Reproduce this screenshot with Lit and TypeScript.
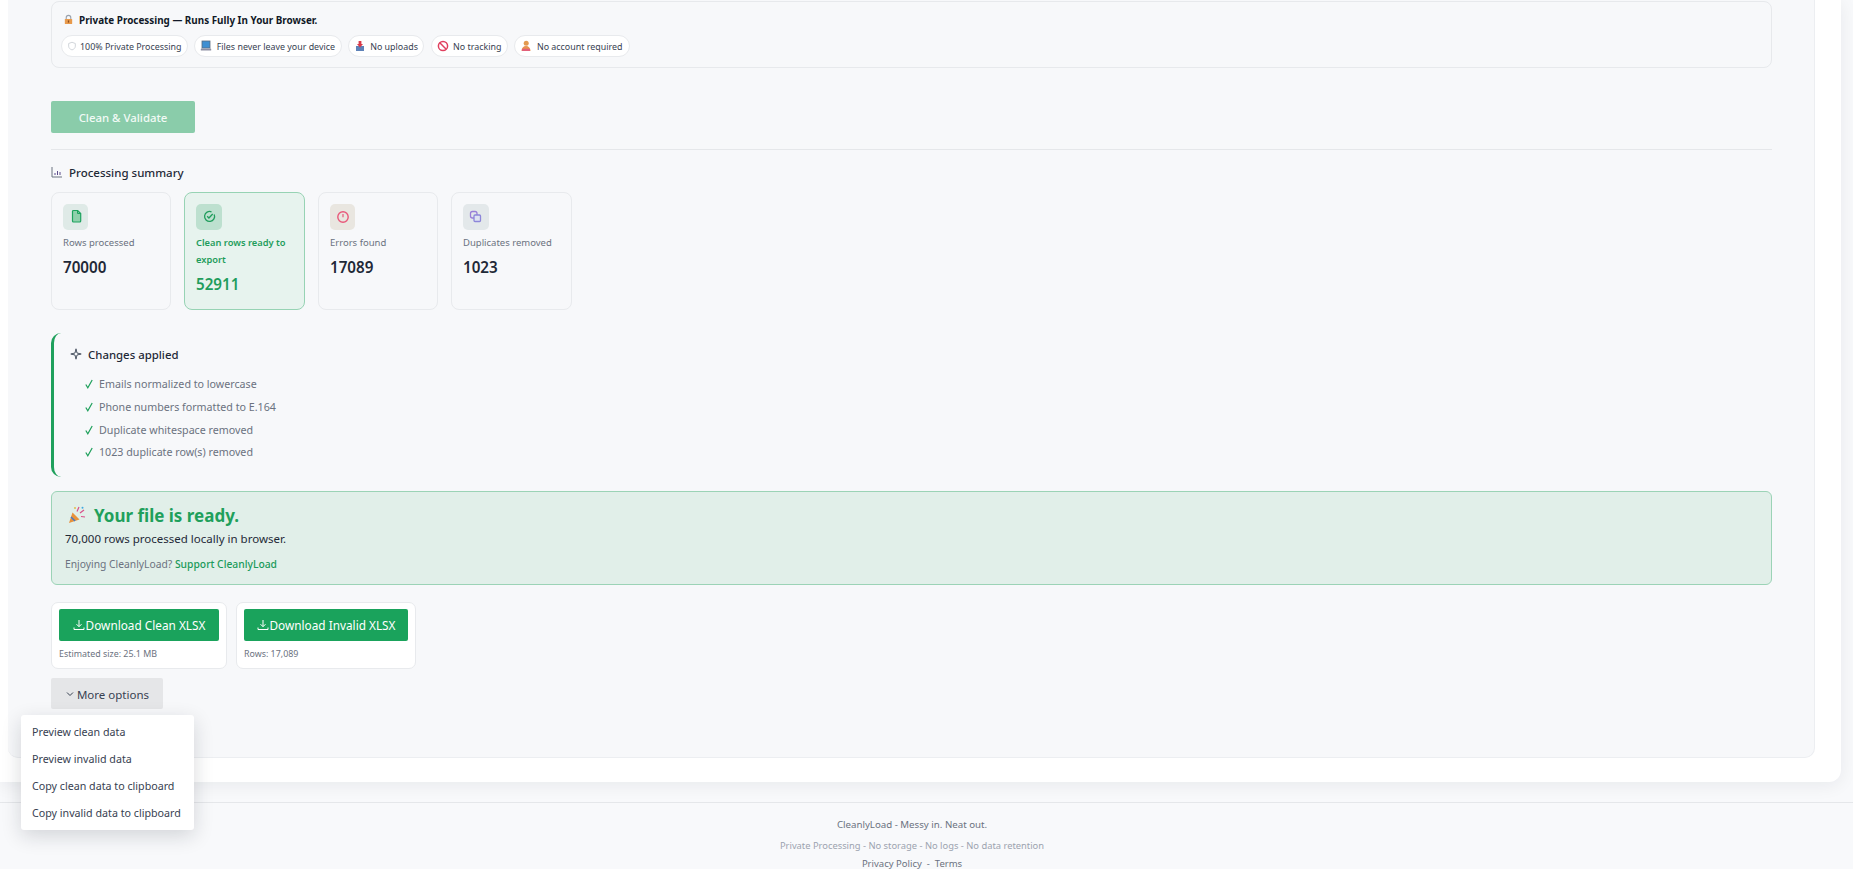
import { LitElement, html, css, svg } from "lit";
import { customElement } from "lit/decorators.js";

const shield = svg`<path d="M6 1.500 10 3v3.200c0 2.300-1.700 3.700-4 4.500-2.300-.8-4-2.200-4-4.500V3z" fill="#fff" stroke="#c9ced4" stroke-width="1"/>`;
const laptop = svg`<rect x="2" y="1" width="8" height="7" fill="#3f8fd2" stroke="#5b6b80" stroke-width=".8"/><rect x=".8" y="8.600" width="10.400" height="2" rx=".4" fill="#8d8fa3"/>`;
const inbox = svg`<path d="M2 6h8v5H2z" fill="#5e82b8"/><path d="M4.600 1h2.800v3h1.600L6 7.400 3 4h1.600z" fill="#d93a4a"/>`;
const noEntry = svg`<circle cx="6" cy="6" r="4.600" fill="#fff" stroke="#e0405f" stroke-width="1.500"/><path d="M2.800 2.800l6.400 6.400" stroke="#e0405f" stroke-width="1.500"/>`;
const person = svg`<circle cx="6.200" cy="3.200" r="2.500" fill="#e39a4f"/><path d="M1.500 11c0-3 1.800-5 4.500-5s4.500 2 4.500 5z" fill="#e8924f"/><path d="M2 8.800h8V11H2z" fill="#e2607a"/>`;

const pills = [
  [shield, "100% Private Processing"],
  [laptop, "Files never leave your device"],
  [inbox, "No uploads"],
  [noEntry, "No tracking"],
  [person, "No account required"],
] as const;

const iconFile = svg`<path d="M6.500 2.500h4.200l3 3v7.500a1 1 0 0 1-1 1H6.500a1 1 0 0 1-1-1V3.500a1 1 0 0 1 1-1z" fill="#8fd0ac" stroke="#1ea35f" stroke-width="1.200"/><path d="M10.500 2.500v3h3" fill="none" stroke="#1ea35f" stroke-width="1"/>`;
const iconCheck = svg`<path d="M14.200 6.500A5 5 0 1 1 11.500 3.800" fill="none" stroke="#1f9d5c" stroke-width="1.300"/><path d="M7.200 8.300l1.700 1.700 3.800-4" fill="none" stroke="#1f9d5c" stroke-width="1.300"/>`;
const iconAlert = svg`<circle cx="9" cy="9" r="5.200" fill="none" stroke="#e8587a" stroke-width="1.400"/><path d="M9 6v3.200" stroke="#e8587a" stroke-width="1.200"/>`;
const iconCopy = svg`<rect x="3.500" y="3.500" width="6.500" height="6.500" rx="2" fill="none" stroke="#9a7fd8" stroke-width="1.300"/><rect x="7" y="7" width="6.500" height="6.500" rx="1" fill="#dfe3f3" stroke="#8d86d9" stroke-width="1.300"/>`;

const cards = [
  { icon: iconFile, label: "Rows processed", value: "70000", bg: "#dfeae7", hl: false },
  { icon: iconCheck, label: "Clean rows ready to export", value: "52911", bg: "#bde0cf", hl: true },
  { icon: iconAlert, label: "Errors found", value: "17089", bg: "#e9e6e0", hl: false },
  { icon: iconCopy, label: "Duplicates removed", value: "1023", bg: "#e3e8ea", hl: false },
];

const changes = [
  "Emails normalized to lowercase",
  "Phone numbers formatted to E.164",
  "Duplicate whitespace removed",
  "1023 duplicate row(s) removed",
];

const dl = html`<svg class="dl" viewBox="0 0 12 12" aria-hidden="true"><path d="M6 1v6.500M3.500 5.200 6 7.700l2.500-2.500M1 8.500V10.500h10V8.500" fill="none" stroke="#fff" stroke-width="1"/></svg>`;

@customElement("app-root")
export class AppRoot extends LitElement {
  static styles = css`
    :host {
      display: block;
      position: relative;
      width: 1853px;
      height: 869px;
      overflow: hidden;
      background: #f8f9fb;
      font-family: "Noto Sans", "Open Sans", sans-serif;
      color: #1f2937;
    }
    .outer {
      background: #fff;
      margin-right: 12px;
      padding: 0 26px 24px 8px;
      border-radius: 0 0 12px 0;
      box-shadow: 0 3px 18px rgba(17, 24, 39, 0.07);
    }
    .inner {
      height: 758px;
      box-sizing: border-box;
      background: #f7f8fa;
      border: 1px solid #eceef1;
      border-top: 0;
      border-left: 0;
      border-radius: 0 0 10px 10px;
      padding: 1px 42px 0 43px;
    }
    .private {
      box-sizing: border-box;
      height: 67px;
      border: 1px solid #e7e9ec;
      border-radius: 8px;
      padding: 10px 9px 0;
      display: flex;
      flex-direction: column;
      gap: 8px;
    }
    .private-title {
      display: flex;
      align-items: center;
      gap: 5px;
      height: 15px;
      font-size: 9.900px;
      font-weight: 700;
      color: #111827;
      margin-left: 2px;
    }
    .pills { display: flex; gap: 6.500px; }
    .pill {
      display: flex;
      align-items: center;
      gap: 4.200px;
      box-sizing: border-box;
      height: 22px;
      padding: 0 5.500px 0 5px;
      background: #fff;
      border: 1px solid #e8eaed;
      border-radius: 11px;
      font-size: 8.900px;
      color: #374151;
      white-space: nowrap;
    }
    .pill svg { width: 12px; height: 12px; flex: none; }
    .pill:first-child { gap: 3px; }
    .pill:first-child svg { width: 10px; height: 10px; }
    .pill:last-child { padding-right: 7px; gap: 4.500px; }
    .private-title svg { width: 11px; height: 11px; flex: none; }
    .clean {
      display: block;
      margin-top: 33px;
      width: 144px;
      height: 32px;
      border: 0;
      border-radius: 2px;
      background: #8accaa;
      color: #f2faf6;
      font: 500 11.400px "Noto Sans", sans-serif;
    }
    .rule { height: 1px; background: #e5e7ea; margin-top: 16px; }
    .sum-title {
      display: flex;
      align-items: center;
      gap: 6px;
      margin-top: 13px;
      height: 18px;
      font-size: 11.500px;
      font-weight: 500;
      color: #1f2937;
    }
    .sum-title svg { width: 12px; height: 12px; }
    .cards { display: flex; gap: 13px; margin-top: 11px; }
    .card {
      box-sizing: border-box;
      width: 120px;
      height: 118px;
      border: 1px solid #e8eaed;
      border-radius: 8px;
      padding: 11px;
    }
    .card:nth-child(even) { width: 121px; }
    .card.hl { background: #e7f3ee; border-color: #97d3b4; }
    .ic {
      width: 25px;
      height: 26px;
      border-radius: 5px;
      display: flex;
      align-items: center;
      justify-content: center;
    }
    .card:nth-child(even) .ic { width: 26px; }
    .ic svg { width: 18px; height: 18px; }
    .lab {
      margin-top: 4px;
      font-size: 9.500px;
      line-height: 17px;
      color: #6b7280;
    }
    .hl .lab { color: #1f9d5c; font-weight: 600; font-size: 9.300px; }
    .val {
      margin-top: 6px;
      font-size: 15.200px;
      line-height: 20px;
      font-weight: 600;
      color: #1f2937;
    }
    .hl .val { color: #1f9d5c; }
    .changes {
      box-sizing: border-box;
      margin-top: 23px;
      height: 144px;
      border-left: 3px solid #1fa05c;
      border-radius: 10px;
      padding: 12px 0 0 16px;
    }
    .ch-title {
      display: flex;
      align-items: center;
      gap: 6px;
      height: 18px;
      font-size: 11.400px;
      font-weight: 500;
      color: #1f2937;
    }
    .ch-title svg { width: 12px; height: 12px; flex: none; }
    .ch-list { margin-top: 10px; padding-left: 15px; display: flex; flex-direction: column; }
    .ch-row {
      display: flex;
      gap: 6px;
      align-items: center;
      height: 22.700px;
      font-size: 10.700px;
      color: #6b7280;
    }
    .ch-row svg { width: 8px; height: 10px; flex: none; }
    .banner {
      box-sizing: border-box;
      margin-top: 14px;
      height: 94px;
      background: #e1efe9;
      border: 1px solid #9bd3b6;
      border-radius: 6px;
      padding: 11px 13px 0;
    }
    .b-title {
      display: flex;
      align-items: center;
      gap: 8px;
      height: 24px;
      margin-left: 3px;
      font-size: 17px;
      font-weight: 700;
      color: #1fa05c;
    }
    .b-title svg { width: 18px; height: 18px; }
    .b-line { margin-top: 2px; height: 19px; line-height: 19px; font-size: 11.500px; color: #1f2937; }
    .b-sup { margin-top: 7px; height: 18px; line-height: 18px; font-size: 10.300px; color: #6b7280; }
    .b-sup span { color: #1a9a5a; font-weight: 500; }
    .downloads { display: flex; gap: 9px; margin-top: 17px; }
    .dcard {
      box-sizing: border-box;
      height: 67px;
      background: #fff;
      border: 1px solid #e8eaed;
      border-radius: 7px;
      padding: 6px 7px 0;
    }
    .dbtn {
      display: flex;
      align-items: center;
      justify-content: center;
      gap: 1px;
      height: 32px;
      background: #1aa35c;
      border-radius: 2px;
      color: #fff;
      font-size: 11.800px;
      white-space: nowrap;
    }
    .dl { width: 12px; height: 12px; }
    .dcap { margin-top: 6px; font-size: 8.900px; line-height: 14px; color: #6b7280; }
    .w1 { width: 176px; }
    .w2 { width: 180px; }
    .more {
      display: flex;
      align-items: center;
      justify-content: center;
      gap: 3px;
      margin-top: 9px;
      padding: 1px 0 0 1px;
      box-sizing: border-box;
      width: 112px;
      height: 31px;
      background: #e5e6e8;
      border-radius: 2px;
      font-size: 11.500px;
      color: #374151;
    }
    .more svg { width: 8px; height: 8px; }
    .menu {
      position: absolute;
      left: 21px;
      top: 715px;
      box-sizing: border-box;
      width: 173px;
      height: 115px;
      background: #fff;
      border-radius: 3px;
      box-shadow: 0 6px 20px rgba(17, 24, 39, 0.16);
      padding: 3.500px 0 0 11px;
      font-size: 10.700px;
      color: #374151;
    }
    .menu div { height: 27.200px; line-height: 27.200px; white-space: nowrap; }
    .footer {
      margin-top: 20px;
      border-top: 1px solid #e5e7ea;
      padding: 14px 29px 0 0;
      text-align: center;
    }
    .f1 { font-size: 9.700px; line-height: 16px; color: #6b7280; }
    .f2 { margin-top: 5px; font-size: 9.350px; line-height: 16px; color: #9ca3af; }
    .f3 { margin-top: 2px; font-size: 9.500px; line-height: 16px; color: #6b7280; }
  `;

  render() {
    return html`
      <div class="outer">
        <div class="inner">
          <section class="private">
            <div class="private-title">
              <svg viewBox="0 0 12 12"><path d="M3.500 6V4a2.500 2.500 0 0 1 5 0v2" fill="none" stroke="#9aa1ac" stroke-width="1.200"/><rect x="2" y="5.500" width="8" height="5.500" rx=".6" fill="#e89a4c"/><rect x="5.300" y="7" width="1.400" height="2.400" fill="#8a4b1d"/></svg>
              Private Processing — Runs Fully In Your Browser.
            </div>
            <div class="pills">
              ${pills.map(([i, t]) => html`<span class="pill"><svg viewBox="0 0 12 12">${i}</svg>${t}</span>`)}
            </div>
          </section>
          <button class="clean">Clean &amp; Validate</button>
          <div class="rule"></div>
          <div class="sum-title">
            <svg viewBox="0 0 12 12"><path d="M1 1v10h10" fill="none" stroke="#6b7280" stroke-width="1"/><path d="M4 9V7M6.500 9V5M9 9V6" stroke="#5b4a8a" stroke-width="1"/></svg>
            Processing summary
          </div>
          <div class="cards">
            ${cards.map(
              (c) => html`<div class="card ${c.hl ? "hl" : ""}">
                <div class="ic" style="background:${c.bg}"><svg viewBox="0 0 18 18">${c.icon}</svg></div>
                <div class="lab">${c.label}</div>
                <div class="val">${c.value}</div>
              </div>`
            )}
          </div>
          <section class="changes">
            <div class="ch-title">
              <svg viewBox="0 0 12 12"><path d="M6 .8 7 5l4.200 1L7 7l-1 4.200L5 7 .8 6 5 5z" fill="none" stroke="#4b5563" stroke-width="1"/></svg>
              Changes applied
            </div>
            <div class="ch-list">
              ${changes.map(
                (t) => html`<div class="ch-row"><svg viewBox="0 0 8 10"><path d="M.8 5.500 2.800 8.800 7.200 1" fill="none" stroke="#1fa05c" stroke-width="1.200"/></svg>${t}</div>`
              )}
            </div>
          </section>
          <section class="banner">
            <div class="b-title">
              <svg viewBox="0 0 18 18"><path d="M1 17 4.500 6.500 11.500 13.500z" fill="#e8923c"/><path d="M3 11l4 4" stroke="#3f78c9" stroke-width="1.400"/><path d="M9 5.500 11 1M12 7l4-3M13 10.500l4 .5" stroke="#d94f8a" stroke-width="1.200"/><circle cx="14.500" cy="1.800" r="1" fill="#3fa9e0"/><circle cx="7" cy="2" r=".9" fill="#e2b93b"/></svg>
              Your file is ready.
            </div>
            <div class="b-line">70,000 rows processed locally in browser.</div>
            <div class="b-sup">Enjoying CleanlyLoad? <span>Support CleanlyLoad</span></div>
          </section>
          <div class="downloads">
            <div class="dcard w1">
              <div class="dbtn">${dl}Download Clean XLSX</div>
              <div class="dcap">Estimated size: 25.1 MB</div>
            </div>
            <div class="dcard w2">
              <div class="dbtn">${dl}Download Invalid XLSX</div>
              <div class="dcap">Rows: 17,089</div>
            </div>
          </div>
          <div class="more">
            <svg viewBox="0 0 8 8"><path d="M1 2.500 4 5.500 7 2.500" fill="none" stroke="#374151" stroke-width="1"/></svg>
            More options
          </div>
        </div>
      </div>
      <footer class="footer">
        <div class="f1">CleanlyLoad - Messy in. Neat out.</div>
        <div class="f2">Private Processing - No storage - No logs - No data retention</div>
        <div class="f3">Privacy Policy &nbsp;-&nbsp; Terms</div>
      </footer>
      <div class="menu">
        <div>Preview clean data</div>
        <div>Preview invalid data</div>
        <div>Copy clean data to clipboard</div>
        <div>Copy invalid data to clipboard</div>
      </div>
    `;
  }
}
